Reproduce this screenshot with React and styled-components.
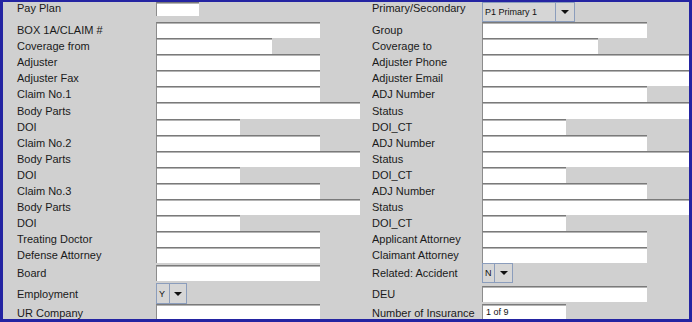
import React from "react";
import styled, { createGlobalStyle } from "styled-components";

const Global = createGlobalStyle`
  html, body { margin: 0; padding: 0; background: #d0d0d0; }
  body { font-family: "Liberation Sans", Arial, sans-serif; }
`;

const Frame = styled.div`
  box-sizing: border-box;
  width: 692px;
  height: 322px;
  overflow: hidden;
  background: #d0d0d0;
  border-style: solid;
  border-color: #2424a2;
  border-width: 2px 3px 3px 3px;
  display: flex;
  flex-direction: column;
`;

const Row = styled.div`
  display: flex;
  flex: 0 0 auto;
  height: ${(p) => p.$h}px;
  align-items: ${(p) => (p.$top ? "flex-start" : "center")};
`;

const Label = styled.div`
  box-sizing: border-box;
  flex: 0 0 ${(p) => p.$w}px;
  padding-left: ${(p) => p.$pad}px;
  margin-top: ${(p) => (p.$top ? "-1px" : "0")};
  font-size: 11px;
  line-height: 14px;
  color: #1a1a1a;
  white-space: nowrap;
  overflow: hidden;
`;

const Cell = styled.div`
  flex: 0 0 ${(p) => p.$w}px;
  height: 100%;
  display: flex;
  align-items: ${(p) => (p.$top ? "flex-start" : "center")};
`;

const Input = styled.div`
  box-sizing: border-box;
  width: ${(p) => p.$w}px;
  height: ${(p) => (p.$h ? `${p.$h}px` : "100%")};
  background: #ffffff;
  border-top: 1px solid #7a7a7a;
  border-left: 1px solid #8c8c8c;
  box-shadow: inset 0 1px 0 #b4b4b4;
  font-size: 9px;
  line-height: 14px;
  padding-left: 3px;
  color: #111;
  white-space: nowrap;
`;

const Combo = styled.div`
  box-sizing: border-box;
  width: ${(p) => p.$w}px;
  height: ${(p) => p.$h}px;
  display: flex;
  border: 1px solid #8b9dbc;
  background: #d6d6d6;
`;

const ComboText = styled.div`
  flex: 1 1 auto;
  font-size: 9px;
  display: flex;
  align-items: center;
  padding-left: 2px;
  color: #111;
  white-space: nowrap;
`;

const ComboButton = styled.div`
  flex: 0 0 ${(p) => p.$w}px;
  border-left: 1px solid #8b9dbc;
  display: flex;
  align-items: center;
  justify-content: center;
`;

const Arrow = styled.div`
  width: 0;
  height: 0;
  border-left: 4px solid transparent;
  border-right: 4px solid transparent;
  border-top: 4px solid #111;
`;

const Field = ({ f }) => {
  if (!f) return null;
  if (f.type === "combo") {
    return (
      <Combo $w={f.w} $h={f.h}>
        <ComboText>{f.text}</ComboText>
        <ComboButton $w={f.bw}>
          <Arrow />
        </ComboButton>
      </Combo>
    );
  }
  return <Input $w={f.w} $h={f.h}>{f.text}</Input>;
};

const inp = (w, extra = {}) => ({ type: "input", w, ...extra });
const combo = (w, text, bw, h) => ({ type: "combo", w, text, bw, h });

const S = 16.1;

const rows = [
  { h: 20, top: true, l: "Pay Plan", lf: inp(43, { h: 14 }), r: "Primary/Secondary", rf: combo(93, "P1 Primary 1", 18, 20) },
  { h: S, l: "BOX 1A/CLAIM #", lf: inp(164), r: "Group", rf: inp(165) },
  { h: S, l: "Coverage from", lf: inp(116), r: "Coverage to", rf: inp(116) },
  { h: S, l: "Adjuster", lf: inp(164), r: "Adjuster Phone", rf: inp(207) },
  { h: S, l: "Adjuster Fax", lf: inp(164), r: "Adjuster Email", rf: inp(207) },
  { h: S, l: "Claim No.1", lf: inp(164), r: "ADJ Number", rf: inp(165) },
  { h: S, l: "Body Parts", lf: inp(204), r: "Status", rf: inp(207) },
  { h: S, l: "DOI", lf: inp(84), r: "DOI_CT", rf: inp(84) },
  { h: S, l: "Claim No.2", lf: inp(164), r: "ADJ Number", rf: inp(165) },
  { h: S, l: "Body Parts", lf: inp(204), r: "Status", rf: inp(207) },
  { h: S, l: "DOI", lf: inp(84), r: "DOI_CT", rf: inp(84) },
  { h: S, l: "Claim No.3", lf: inp(164), r: "ADJ Number", rf: inp(165) },
  { h: S, l: "Body Parts", lf: inp(204), r: "Status", rf: inp(207) },
  { h: S, l: "DOI", lf: inp(84), r: "DOI_CT", rf: inp(84) },
  { h: S, l: "Treating Doctor", lf: inp(164), r: "Applicant Attorney", rf: inp(165) },
  { h: S, l: "Defense Attorney", lf: inp(164), r: "Claimant Attorney", rf: inp(165) },
  { h: 20, l: "Board", lf: inp(164, { h: 16 }), r: "Related: Accident", rf: combo(31, "N", 17, 20) },
  { h: 21, l: "Employment", lf: combo(31, "Y", 16, 21), r: "DEU", rf: inp(165, { h: 16 }) },
  { h: 17, l: "UR Company", lf: inp(164, { h: 17 }), r: "Number of Insurance", rf: inp(84, { h: 17, text: "1 of 9" }) },
];

export default function App() {
  return (
    <>
      <Global />
      <Frame>
        {rows.map((r, i) => (
          <Row key={i} $h={r.h} $top={r.top}>
            <Label $w={153} $pad={14} $top={r.top}>{r.l}</Label>
            <Cell $w={216} $top={r.top}>
              <Field f={r.lf} />
            </Cell>
            <Label $w={110} $pad={0} $top={r.top}>{r.r}</Label>
            <Cell $w={207} $top={r.top}>
              <Field f={r.rf} />
            </Cell>
          </Row>
        ))}
      </Frame>
    </>
  );
}
